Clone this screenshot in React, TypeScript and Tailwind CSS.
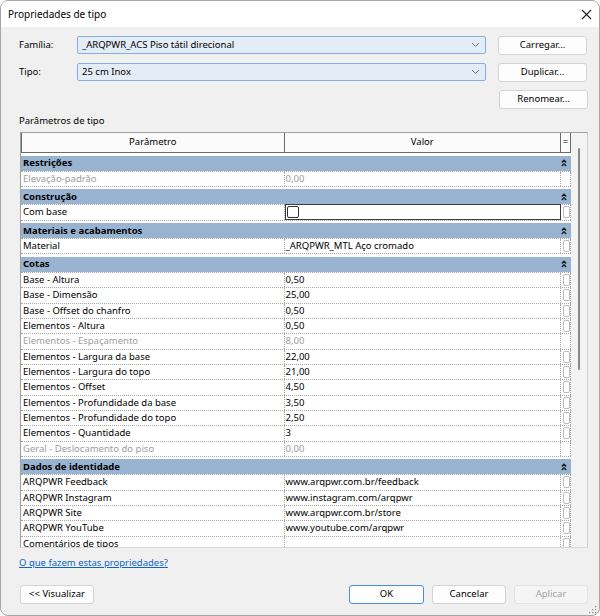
import React from 'react';

type Row = { p: string; v?: string; dim?: boolean; check?: boolean; noLink?: boolean };
type Section = { title: string; rows: Row[] };

const sections: Section[] = [
  { title: 'Restrições', rows: [{ p: 'Elevação-padrão', v: '0,00', dim: true, noLink: true }] },
  { title: 'Construção', rows: [{ p: 'Com base', check: true }] },
  { title: 'Materiais e acabamentos', rows: [{ p: 'Material', v: '_ARQPWR_MTL Aço cromado' }] },
  {
    title: 'Cotas',
    rows: [
      { p: 'Base - Altura', v: '0,50' },
      { p: 'Base - Dimensão', v: '25,00' },
      { p: 'Base - Offset do chanfro', v: '0,50' },
      { p: 'Elementos - Altura', v: '0,50' },
      { p: 'Elementos - Espaçamento', v: '8,00', dim: true, noLink: true },
      { p: 'Elementos - Largura da base', v: '22,00' },
      { p: 'Elementos - Largura do topo', v: '21,00' },
      { p: 'Elementos - Offset', v: '4,50' },
      { p: 'Elementos - Profundidade da base', v: '3,50' },
      { p: 'Elementos - Profundidade do topo', v: '2,50' },
      { p: 'Elementos - Quantidade', v: '3' },
      { p: 'Geral - Deslocamento do piso', v: '0,00', dim: true, noLink: true },
    ],
  },
  {
    title: 'Dados de identidade',
    rows: [
      { p: 'ARQPWR Feedback', v: 'www.arqpwr.com.br/feedback' },
      { p: 'ARQPWR Instagram', v: 'www.instagram.com/arqpwr' },
      { p: 'ARQPWR Site', v: 'www.arqpwr.com.br/store' },
      { p: 'ARQPWR YouTube', v: 'www.youtube.com/arqpwr' },
      { p: 'Comentários de tipos', v: '' },
    ],
  },
];

function Chevron() {
  return (
    <svg width="9" height="6" viewBox="0 0 9 6" className="shrink-0">
      <polyline points="1,1 4.5,4.5 8,1" fill="none" stroke="#707070" strokeWidth="1" />
    </svg>
  );
}

function Collapse() {
  return (
    <svg width="6" height="8" viewBox="0 0 6 8" className="shrink-0">
      <polyline points="0.8,3.5 3,1.2 5.2,3.5" fill="none" stroke="#1a1a1a" strokeWidth="1.3" />
      <polyline points="0.8,7 3,4.7 5.2,7" fill="none" stroke="#1a1a1a" strokeWidth="1.3" />
    </svg>
  );
}

function Combo({ text }: { text: string }) {
  return (
    <div className="flex items-center justify-between w-[409px] h-[18px] pl-[4px] pr-[5px] bg-[#e4ecf5] border border-[#86b0dc] rounded-[2px]">
      <span>{text}</span>
      <Chevron />
    </div>
  );
}

function Btn({ label, w, variant }: { label: string; w: string; variant?: 'default' | 'disabled' }) {
  const cls =
    variant === 'default'
      ? 'border-[#4a90d9] bg-[#fdfdfd] text-black'
      : variant === 'disabled'
        ? 'border-[#e2e2e2] bg-[#f5f5f5] text-[#a3a3a3]'
        : 'border-[#d3d3d3] bg-[#fdfdfd] text-black';
  return (
    <div className={`flex items-center justify-center h-[19px] border rounded-[3px] ${w} ${cls}`}>
      {label}
    </div>
  );
}

function GroupRow({ title }: { title: string }) {
  return (
    <div className="h-[18.5px] pt-[2.5px] bg-white border-b border-dotted border-[#a8a8a8]">
      <div className="flex items-center justify-between h-full pl-[2px] pr-[4px] bg-[#99b4d1] font-bold">
        <span>{title}</span>
        <Collapse />
      </div>
    </div>
  );
}

function DataRow({ row }: { row: Row }) {
  const color = row.dim ? 'text-[#9d9d9d]' : 'text-black';
  return (
    <div className={`flex h-[15.33px] border-b border-dotted border-[#a8a8a8] ${color}`}>
      <div className="w-[264px] pl-[2px] border-r border-dotted border-[#a8a8a8] leading-[14px] whitespace-nowrap overflow-hidden">
        {row.p}
      </div>
      {row.check ? (
        <div className="w-[277px] -mt-[1px] h-[16px] pl-[1px] flex items-center border border-[#3c3c3c] bg-white">
          <div className="w-[12px] h-[12px] border border-[#333] rounded-[2px] bg-white" />
        </div>
      ) : (
        <div className="w-[277px] pl-[1px] border-r border-dotted border-[#a8a8a8] leading-[14px] whitespace-nowrap overflow-hidden">
          {row.v}
        </div>
      )}
      <div className="w-[10px] pl-[2px] pt-[1px] border-r border-dotted border-[#a8a8a8]">
        {!row.noLink && <div className="w-[7px] h-[12px] rounded-[2px] border border-[#bdbdbd] bg-white" />}
      </div>
    </div>
  );
}

export default function App() {
  return (
    <div
      className="w-[600px] h-[616px] bg-white text-[9.5px] text-black"
      style={{ fontFamily: '"Noto Sans", "Open Sans", sans-serif' }}
    >
      <div className="flex flex-col w-full h-full rounded-[8px] border border-[#a6a6a6] overflow-hidden bg-[#f0f0f0]">
        {/* title bar */}
        <div className="flex items-center justify-between h-[26px] pl-[7px] pr-[7px] bg-white shrink-0">
          <span className="text-[10px]">Propriedades de tipo</span>
          <svg width="11" height="11" viewBox="0 0 11 11">
            <line x1="1" y1="1" x2="10" y2="10" stroke="#1f1f1f" strokeWidth="1.1" />
            <line x1="10" y1="1" x2="1" y2="10" stroke="#1f1f1f" strokeWidth="1.1" />
          </svg>
        </div>

        {/* body */}
        <div className="flex flex-col flex-1 pl-[18px] pr-[11px] pt-[9px]">
          <div className="flex items-center h-[18px]">
            <span className="w-[58px]">Família:</span>
            <Combo text="_ARQPWR_ACS Piso tátil direcional" />
            <div className="ml-[12px]">
              <Btn label="Carregar..." w="w-[89px]" />
            </div>
          </div>
          <div className="flex items-center h-[18px] mt-[9px]">
            <span className="w-[58px]">Tipo:</span>
            <Combo text="25 cm Inox" />
            <div className="ml-[12px]">
              <Btn label="Duplicar..." w="w-[89px]" />
            </div>
          </div>
          <div className="flex justify-end h-[18px] mt-[9px]">
            <Btn label="Renomear..." w="w-[89px]" />
          </div>

          <div className="mt-[6px] h-[14px] leading-[14px]">Parâmetros de tipo</div>

          {/* table */}
          <div className="flex mt-[4px] ml-[1px] h-[416px] border-t border-l border-[#a0a0a0] border-b border-r border-b-[#dadada] border-r-[#d0d0d0]">
            <div className="flex flex-col w-[551px] bg-white overflow-hidden">
              <div className="flex h-[20px] shrink-0 bg-[#fbfbfb] border-b border-[#6a6a6a]">
                <div className="w-[264px] flex items-center justify-center border-l border-r border-[#6a6a6a]">
                  Parâmetro
                </div>
                <div className="w-[277px] flex items-center justify-center border-r border-[#6a6a6a]">Valor</div>
                <div className="w-[10px] flex items-center justify-center border-r border-[#6a6a6a]">=</div>
              </div>
              {sections.map((s) => (
                <div key={s.title} className="shrink-0">
                  <GroupRow title={s.title} />
                  {s.rows.map((r) => (
                    <DataRow key={r.p} row={r} />
                  ))}
                </div>
              ))}
            </div>
            <div className="w-[16px] bg-[#f3f3f3] pt-[15px] pl-[7px]">
              <div className="w-[2px] h-[222px] rounded-full bg-[#8a8a8a]" />
            </div>
          </div>

          <div className="mt-[8px] h-[14px] leading-[14px]">
            <span className="text-[#0a64c8] underline">O que fazem estas propriedades?</span>
          </div>

          <div className="flex items-center justify-between mt-[15px] ml-[1px]">
            <Btn label="<< Visualizar" w="w-[74px]" />
            <div className="flex gap-[8px]">
              <Btn label="OK" w="w-[75px]" variant="default" />
              <Btn label="Cancelar" w="w-[74px]" />
              <Btn label="Aplicar" w="w-[74px]" variant="disabled" />
            </div>
          </div>

          <div className="flex justify-end -mr-[9px] mt-[2px]">
            <svg width="8" height="8" viewBox="0 0 8 8">
              <rect x="6" y="0" width="1.2" height="1.2" fill="#8c8c8c" />
              <rect x="6" y="3" width="1.2" height="1.2" fill="#8c8c8c" />
              <rect x="3" y="3" width="1.2" height="1.2" fill="#8c8c8c" />
              <rect x="6" y="6" width="1.2" height="1.2" fill="#8c8c8c" />
              <rect x="3" y="6" width="1.2" height="1.2" fill="#8c8c8c" />
              <rect x="0" y="6" width="1.2" height="1.2" fill="#8c8c8c" />
            </svg>
          </div>
        </div>
      </div>
    </div>
  );
}
